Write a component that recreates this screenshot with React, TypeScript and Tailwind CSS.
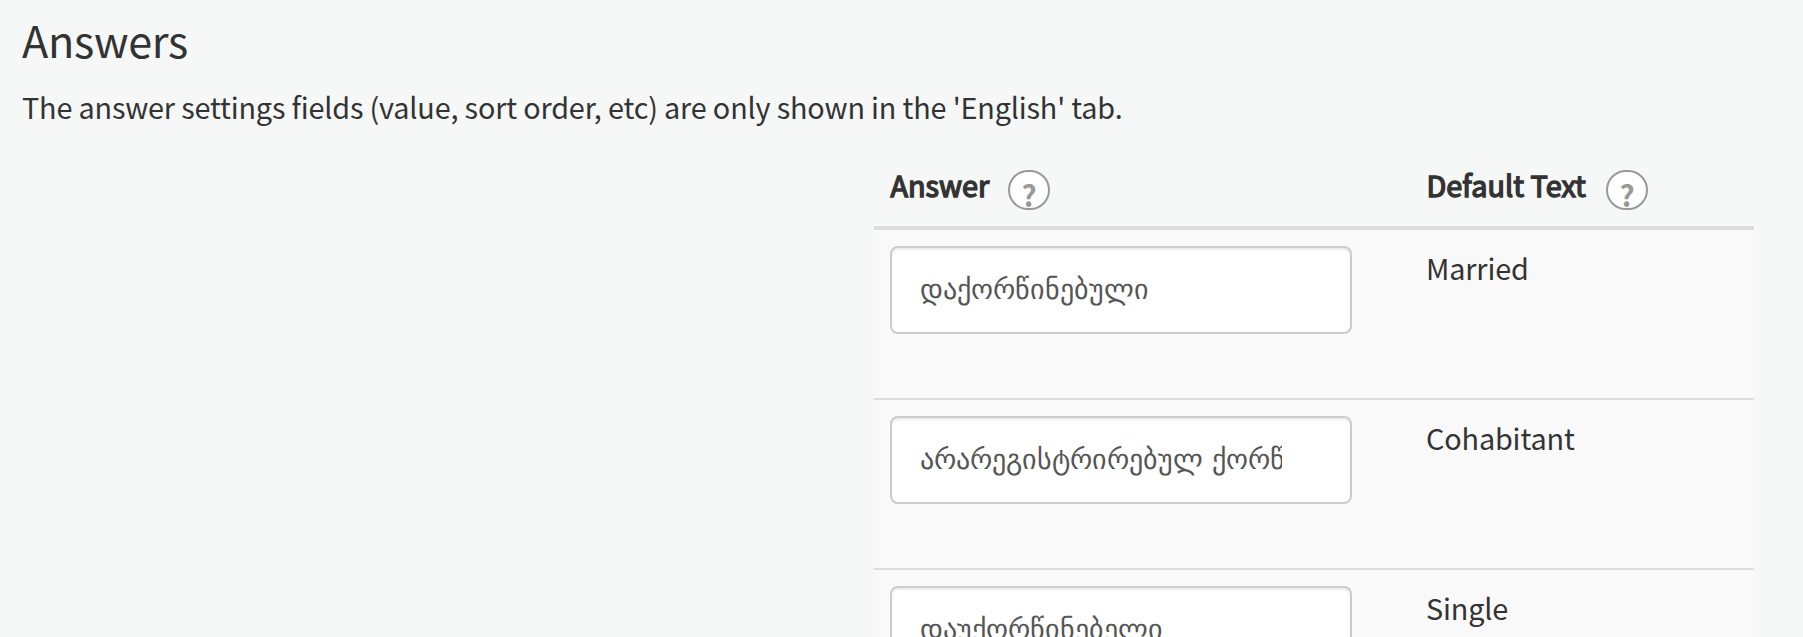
const Help = () => (
  <span className="mt-[9px] flex h-10 w-[42px] shrink-0 items-center justify-center rounded-full border-2 border-[#999] bg-white text-[29.5px] font-bold leading-[40px] text-[#999]">
    <span className="pt-[8px]">?</span>
  </span>
);

const rows = [
  { value: 'დაქორწინებული', text: 'Married' },
  { value: 'არარეგისტრირებულ ქორწინებაში', text: 'Cohabitant' },
  { value: 'დაუქორწინებელი', text: 'Single' },
];

export default function App() {
  return (
    <div className="h-[637px] overflow-hidden bg-[#f6f8f8] pl-[22px] font-['Noto_Sans_CJK_SC',sans-serif] text-[#333]">
      <h2 className="pt-[5px] text-[43.2px] leading-[68px] tracking-[-0.28px]">Answers</h2>
      <p className="mt-[12px] text-[28.8px] leading-[43px] tracking-[-0.165px]">The answer settings fields (value, sort order, etc) are only shown in the 'English' tab.</p>
      <div className="ml-[852px] mt-[30px] w-[880px]">
        <div className="flex h-[72px] border-b-4 border-[#ddd] text-[28.8px] leading-[48px]">
          <div className="flex w-[552px] pl-4 pt-[3px]"><span className="w-[118px] shrink-0 pl-[0.5px] [-webkit-text-stroke:1.4px_#333]">Answer</span><Help /></div>
          <div className="flex pt-[3px]"><span className="w-[180px] shrink-0 pl-[0.5px] tracking-[0.05px] [-webkit-text-stroke:1.4px_#333]">Default Text</span><Help /></div>
        </div>
        {rows.map((r) => (
          <div key={r.text} className="flex h-[170px] border-b-2 border-[#ddd] bg-[#f9f9f9] pt-4">
            <div className="w-[552px] pl-4">
              <input defaultValue={r.value} className="block h-[88px] w-[462px] rounded-lg border-2 border-[#ccc] bg-white pb-[6px] pl-7 pr-[68px] text-[28px] text-[#555] shadow-[inset_0_2px_2px_rgba(0,0,0,0.075)] [word-spacing:3px]" />
            </div>
            <span className="text-[28.8px] leading-[43px] tracking-[-0.14px]">{r.text}</span>
          </div>
        ))}
      </div>
    </div>
  );
}
